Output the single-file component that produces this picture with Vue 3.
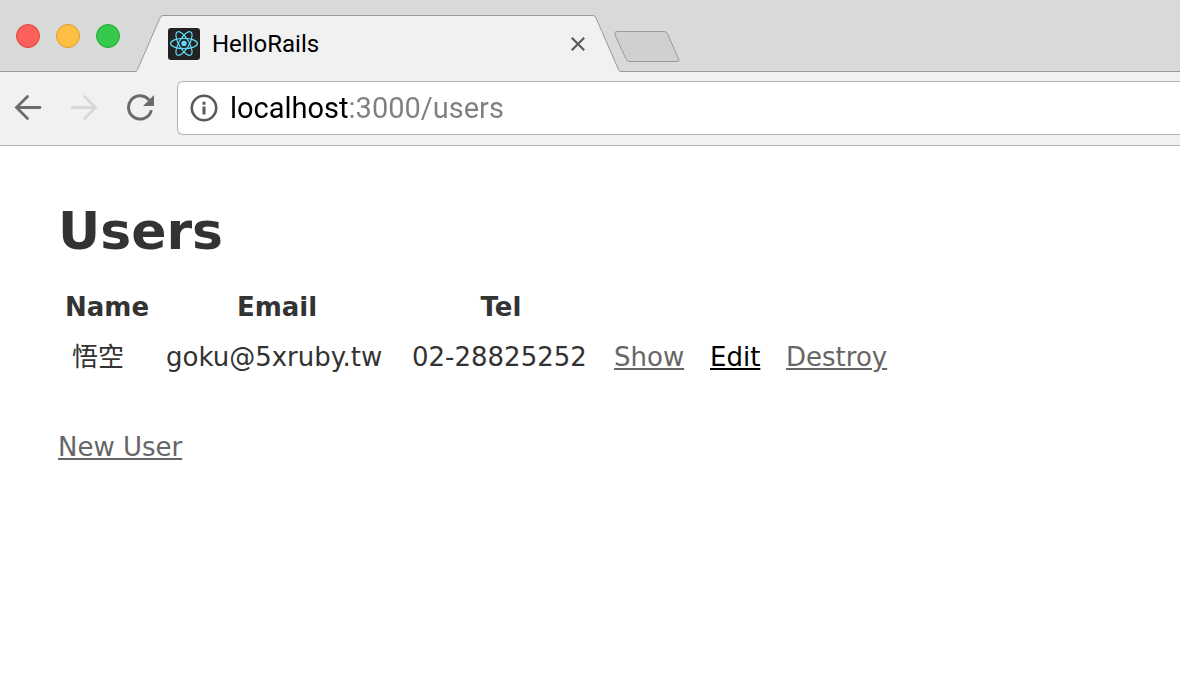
<script setup>
import { ref } from 'vue'

const address = ref('localhost:3000/users')
const columns = ['Name', 'Email', 'Tel']
const users = [{ name: '悟空', email: 'goku@5xruby.tw', tel: '02-28825252' }]
</script>

<template>
  <div class="browser">
    <header class="tabstrip">
      <div class="lights">
        <button class="light red" aria-label="Close window"></button>
        <button class="light amber" aria-label="Minimize window"></button>
        <button class="light green" aria-label="Zoom window"></button>
      </div>
      <div class="tab">
        <svg class="edge" width="27" height="57" viewBox="0 0 27 57" aria-hidden="true">
          <path d="M0 56.5Q.8 56.2 1.5 54.5L24 3Q25.2.5 27 .5V57H0z" fill="#f1f1f1" />
          <path d="M0 56.5Q.8 56.2 1.5 54.5L24 3Q25.2.5 27 .5" fill="none" stroke="#999" />
        </svg>
        <div class="tab-body">
          <svg class="favicon" width="32" height="32" viewBox="0 0 32 32" aria-hidden="true">
            <rect width="32" height="32" rx="3" fill="#222" />
            <g fill="none" stroke="#61dafb" stroke-width="1.2">
              <ellipse cx="16" cy="15.5" rx="13.4" ry="5.1" />
              <ellipse cx="16" cy="15.5" rx="13.4" ry="5.1" transform="rotate(60 16 15.5)" />
              <ellipse cx="16" cy="15.5" rx="13.4" ry="5.1" transform="rotate(120 16 15.5)" />
            </g>
            <circle cx="16" cy="15.5" r="2.7" fill="#61dafb" />
          </svg>
          <span class="tab-title">HelloRails</span>
          <button class="tab-close" aria-label="Close tab">
            <svg width="14" height="14" viewBox="0 0 14 14" aria-hidden="true">
              <path d="M.8.8l12.4 12.4M13.2.8L.8 13.2" stroke="#5a5a5a" stroke-width="2.2" />
            </svg>
          </button>
        </div>
        <svg class="edge" width="27" height="57" viewBox="0 0 27 57" aria-hidden="true">
          <path d="M0 .5Q1.8.5 3 3L25.5 54.5Q26.2 56.2 27 56.5V57H0z" fill="#f1f1f1" />
          <path d="M0 .5Q1.8.5 3 3L25.5 54.5Q26.2 56.2 27 56.5" fill="none" stroke="#999" />
        </svg>
      </div>
      <div class="strip-rest">
        <button class="new-tab" aria-label="New tab">
          <svg width="66" height="32" viewBox="0 0 66 32" aria-hidden="true">
            <path d="M3 .5H50Q52.5.5 53.7 3L64.5 28Q65.8 30.5 63 30.5H16Q13.5 30.5 12 28L.8 3.5Q0 .5 3 .5z" fill="#d0d0d0" stroke="#999" />
          </svg>
        </button>
      </div>
    </header>

    <nav class="toolbar" aria-label="Browser">
      <button class="tool" aria-label="Back">
        <svg width="28" height="28" viewBox="0 0 28 28" aria-hidden="true">
          <path d="M13.5 2.5L2.5 13.5l11 11M2.5 13.5H26" fill="none" stroke="#6b6b6b" stroke-width="2.8" stroke-linecap="round" />
        </svg>
      </button>
      <button class="tool" aria-label="Forward" disabled>
        <svg width="28" height="28" viewBox="0 0 28 28" aria-hidden="true">
          <path d="M14.5 2.5l11 11-11 11M25.5 13.5H2" fill="none" stroke="#d8d8d8" stroke-width="2.8" stroke-linecap="round" />
        </svg>
      </button>
      <button class="tool" aria-label="Reload">
        <svg width="28" height="28" viewBox="0 0 28 28" aria-hidden="true">
          <path d="M22.4 5.3A11.6 11.6 0 1 0 25 17.5" fill="none" stroke="#6b6b6b" stroke-width="3" stroke-linecap="round" />
          <path d="M28 1V12H17z" fill="#6b6b6b" />
        </svg>
      </button>
      <label class="omnibox">
        <svg width="28" height="28" viewBox="0 0 28 28" aria-hidden="true">
          <circle cx="14" cy="14" r="12.2" fill="none" stroke="#5a5a5a" stroke-width="2.6" />
          <path d="M12.5 7.7h3v3h-3zM12.5 12.4h3v8.2h-3z" fill="#5a5a5a" />
        </svg>
        <input v-model="address" class="address" type="text" aria-label="Address" spellcheck="false" />
      </label>
    </nav>

    <main class="page">
      <h1>Users</h1>
      <table>
        <thead>
          <tr>
            <th v-for="column in columns" :key="column" scope="col">{{ column }}</th>
            <td colspan="3"></td>
          </tr>
        </thead>
        <tbody>
          <tr v-for="user in users" :key="user.email">
            <td class="name">{{ user.name }}</td>
            <td class="email">{{ user.email }}</td>
            <td class="tel">{{ user.tel }}</td>
            <td class="show"><a href="#show">Show</a></td>
            <td class="edit"><a href="#edit" class="active">Edit</a></td>
            <td><a href="#destroy">Destroy</a></td>
          </tr>
        </tbody>
      </table>
      <a href="#new">New User</a>
    </main>
  </div>
</template>

<style>
body {
  margin: 0;
  background: #fff;
}
</style>

<style scoped>
.browser {
  min-height: 100vh;
  overflow: hidden;
  font-family: Roboto, "Liberation Sans", sans-serif;
}
button {
  padding: 0;
  border: 0;
  background: none;
}
svg {
  display: block;
}
.tabstrip {
  display: flex;
  align-items: flex-end;
  height: 72px;
  background: #d8d9d9;
}
.lights {
  box-sizing: border-box;
  display: flex;
  gap: 16px;
  width: 136px;
  height: 72px;
  padding: 24px 16px 0;
  border-bottom: 1px solid #999;
}
.light {
  box-sizing: border-box;
  width: 24px;
  height: 24px;
  border: 1px solid;
  border-radius: 50%;
}
.red {
  background: #fc605b;
  border-color: #e0443f;
}
.amber {
  background: #fdbe41;
  border-color: #de9f34;
}
.green {
  background: #34c94a;
  border-color: #24a937;
}
.tab {
  display: flex;
  width: 484px;
}
.edge {
  flex: none;
}
.tab-body {
  box-sizing: border-box;
  flex: 1;
  display: flex;
  align-items: center;
  gap: 12px;
  height: 57px;
  padding: 0 8px 0 5px;
  border-top: 1px solid #999;
  background: #f1f1f1;
}
.tab-title {
  flex: 1;
  font-size: 24px;
  line-height: 28px;
  color: #000;
}
.strip-rest {
  box-sizing: border-box;
  flex: 1;
  height: 72px;
  padding-top: 31px;
  border-bottom: 1px solid #999;
}
.new-tab {
  display: block;
  margin-left: -6px;
}
.toolbar {
  box-sizing: border-box;
  display: flex;
  align-items: center;
  gap: 28px;
  height: 74px;
  padding: 0 0 2px 14px;
  border-bottom: 1px solid #b3b3b3;
  background: #f1f1f1;
}
.omnibox {
  box-sizing: border-box;
  flex: 1;
  display: flex;
  align-items: center;
  gap: 12px;
  height: 54px;
  margin-left: -5px;
  padding-left: 12px;
  border: 1px solid #b3b3b3;
  border-right: 0;
  border-radius: 6px 0 0 6px;
  background: #fff;
}
.address {
  flex: 1;
  min-width: 0;
  height: 38px;
  padding: 0;
  border: 0;
  outline: 0;
  font: 29px/38px Roboto, "Liberation Sans", sans-serif;
  color: transparent;
  caret-color: #000;
  background: linear-gradient(90deg, #000 118px, #808080 118px);
  -webkit-background-clip: text;
  background-clip: text;
}
.page {
  padding: 50px 58px;
  font: 26px/36px "DejaVu Sans", "Noto Sans CJK TC", sans-serif;
  color: #333;
}
h1 {
  margin: 0 0 17px;
  font-size: 52px;
  line-height: 70px;
}
table {
  margin-bottom: 36px;
  border-spacing: 4px;
}
th {
  padding: 2px 2px 10px;
}
td {
  padding: 0 10px 14px;
}
.name {
  min-width: 70px;
}
.email {
  min-width: 222px;
}
.tel {
  min-width: 178px;
}
.show {
  min-width: 72px;
}
.edit {
  min-width: 52px;
}
a {
  color: #666;
  text-decoration-thickness: 2px;
  text-underline-offset: 2px;
}
a.active {
  color: #000;
}
</style>
